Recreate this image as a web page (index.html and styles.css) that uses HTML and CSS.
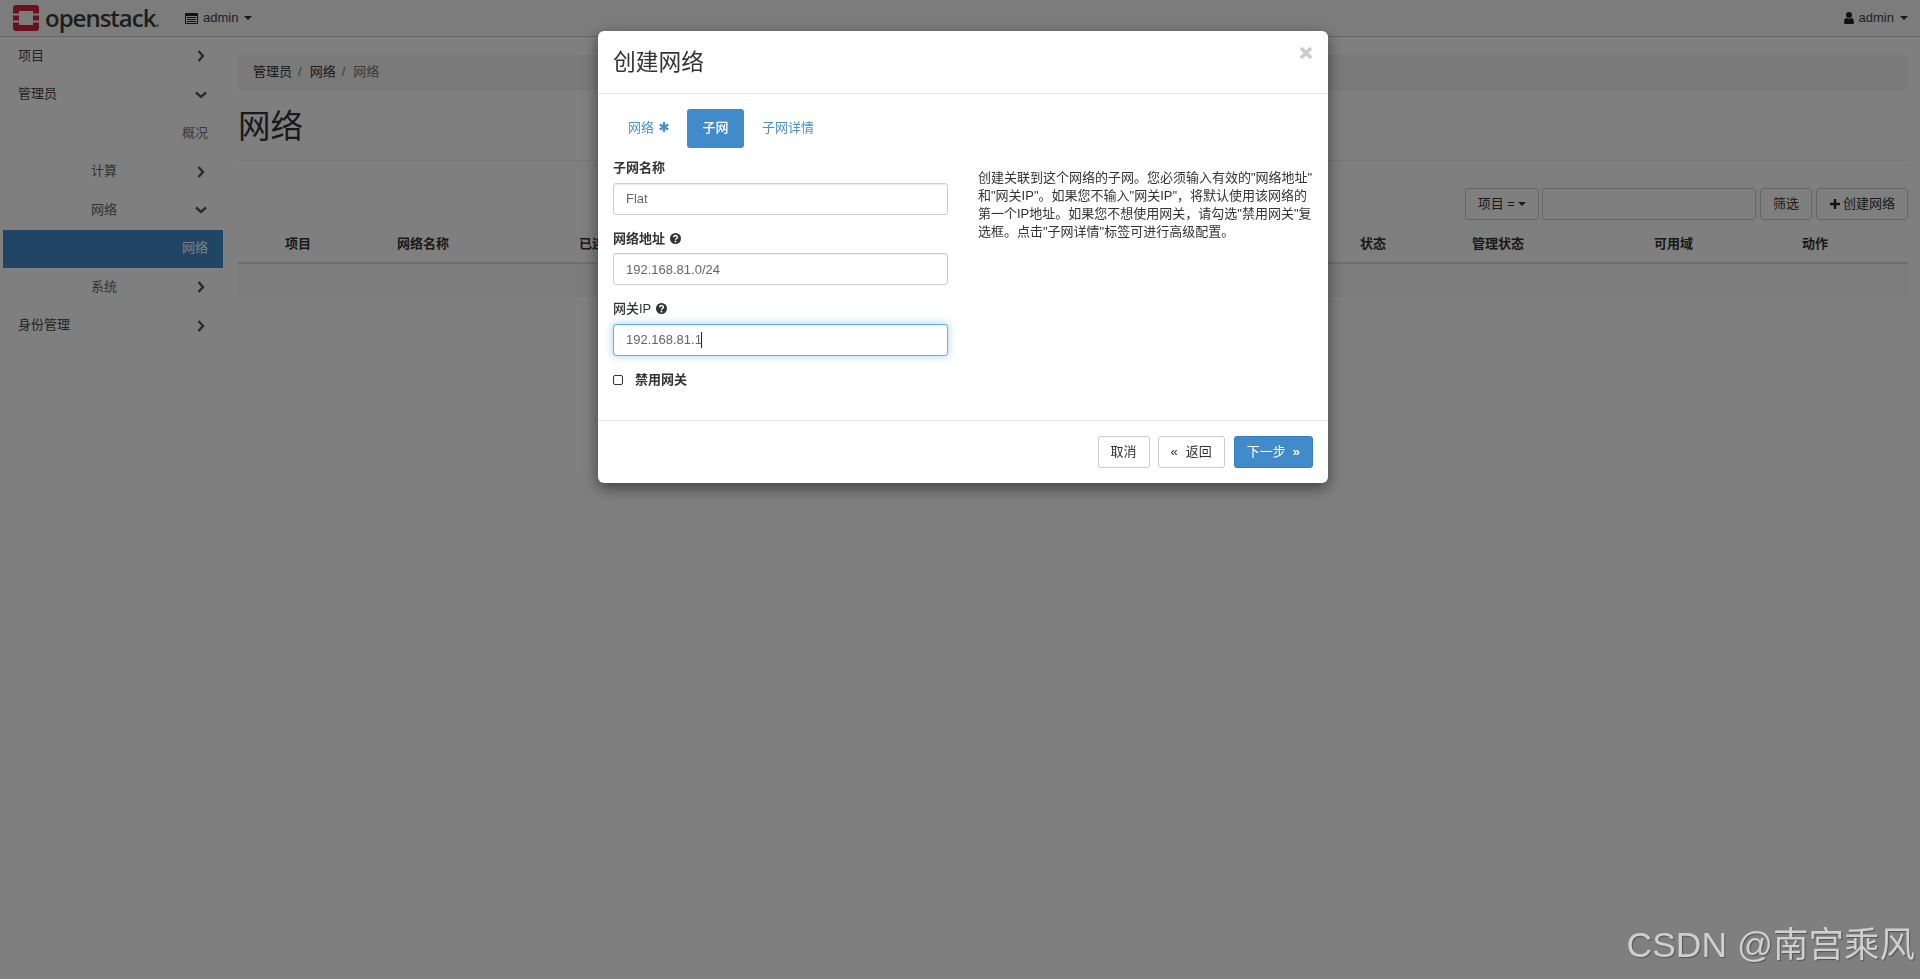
FILE: index.html
```html
<!DOCTYPE html>
<html lang="zh-CN">
<head>
    <meta charset="UTF-8">
    <meta name="viewport" content="width=device-width, initial-scale=1.0">
    <title>网络 - OpenStack Dashboard</title>
    <link rel="stylesheet" href="styles.css">
</head>
<body>
    <nav class="navbar">
        <a class="brand">
            <svg class="logo" viewBox="0 0 26 26" width="26" height="26">
                <path fill="#d6203a" d="M3 0h20a3 3 0 0 1 3 3v5.500h-6V6H6v2.500H0V3a3 3 0 0 1 3-3zM0 10.500h6v5H0zM20 10.500h6v5h-6zM0 17.500h6V20h14v-2.500h6V23a3 3 0 0 1-3 3H3a3 3 0 0 1-3-3z"/>
            </svg>
            <span class="brand-name">openstack</span><span class="brand-dot"></span>
        </a>
        <a class="nav-menu">
            <svg viewBox="0 0 13 11" width="13" height="11">
                <path fill="#222" fill-rule="evenodd" d="M1 0h11a1 1 0 0 1 1 1v9a1 1 0 0 1-1 1H1a1 1 0 0 1-1-1V1a1 1 0 0 1 1-1zm0 3v7h11V3zm1 1h9v1H2zm0 2h9v1H2zm0 2h9v1H2z"/>
            </svg>
            admin <span class="caret"></span>
        </a>
        <a class="nav-menu nav-user">
            <svg viewBox="0 0 10 12" width="10" height="12">
                <circle cx="5" cy="3" r="3" fill="#222"/>
                <path fill="#222" d="M0 10.500C0 8 1 6 2.500 6c.7.500 1.500.800 2.500.800S6.800 6.500 7.500 6C9 6 10 8 10 10.500c0 1-.7 1.500-1.500 1.500h-7C.7 12 0 11.500 0 10.500z"/>
            </svg>
            admin <span class="caret"></span>
        </a>
    </nav>

    <div class="page">
        <aside class="sidebar">
            <a class="side-item">项目 <svg class="chevron" viewBox="0 0 8 12"><path d="M1.500 1l4.500 5-4.500 5"/></svg></a>
            <a class="side-item">管理员 <svg class="chevron-down" viewBox="0 0 12 8"><path d="M1 1.500l5 4.500 5-4.500"/></svg></a>
            <a class="side-item side-leaf">概况</a>
            <a class="side-item side-sub">计算 <svg class="chevron" viewBox="0 0 8 12"><path d="M1.500 1l4.500 5-4.500 5"/></svg></a>
            <a class="side-item side-sub">网络 <svg class="chevron-down" viewBox="0 0 12 8"><path d="M1 1.500l5 4.500 5-4.500"/></svg></a>
            <a class="side-item side-leaf side-active">网络</a>
            <a class="side-item side-sub">系统 <svg class="chevron" viewBox="0 0 8 12"><path d="M1.500 1l4.500 5-4.500 5"/></svg></a>
            <a class="side-item">身份管理 <svg class="chevron" viewBox="0 0 8 12"><path d="M1.500 1l4.500 5-4.500 5"/></svg></a>
        </aside>

        <main class="content">
            <ol class="breadcrumb">
                <li>管理员</li>
                <li>网络</li>
                <li class="crumb-current">网络</li>
            </ol>
            <h1 class="page-title">网络</h1>

            <div class="toolbar">
                <button class="btn btn-filter">项目 = <span class="caret"></span></button>
                <input class="toolbar-input" type="text">
                <button class="btn btn-go">筛选</button>
                <button class="btn btn-create">
                    <svg viewBox="0 0 10 10" width="10" height="10"><path fill="#222" d="M3.800 0h2.400v3.800H10v2.400H6.200V10H3.800V6.200H0V3.800h3.800z"/></svg>
                    创建网络
                </button>
            </div>

            <div class="table-head">
                <span></span>
                <span>项目</span>
                <span>网络名称</span>
                <span>已连接的子网</span>
                <span>状态</span>
                <span>管理状态</span>
                <span>可用域</span>
                <span>动作</span>
            </div>
            <div class="table-empty"></div>
        </main>
    </div>

    <div class="backdrop">
        <section class="modal">
            <header class="modal-header">
                <h4>创建网络</h4>
                <svg class="close" viewBox="0 0 14 14" width="14" height="14"><path d="M2 2l10 10M12 2L2 12"/></svg>
            </header>

            <div class="modal-body">
                <ul class="tabs">
                    <li class="tab tab-first">网络
                        <svg class="star" viewBox="0 0 10 10" width="10" height="10"><path d="M5 0v10M.7 2.500l8.600 5M9.300 2.500l-8.600 5"/></svg>
                    </li>
                    <li class="tab tab-active">子网</li>
                    <li class="tab">子网详情</li>
                </ul>

                <div class="form-row">
                    <form class="form-col">
                        <div class="form-group">
                            <label>子网名称</label>
                            <input class="field" type="text" value="Flat">
                        </div>
                        <div class="form-group">
                            <label>网络地址
                                <svg class="help" viewBox="0 0 11 11" width="11" height="11"><circle cx="5.500" cy="5.500" r="5.500"/><path d="M3.700 4.300c0-2.300 3.700-2.300 3.700-.1 0 1.300-1.900 1.300-1.900 2.600"/><circle class="help-dot" cx="5.500" cy="8.500" r=".9"/></svg>
                            </label>
                            <input class="field" type="text" value="192.168.81.0/24">
                        </div>
                        <div class="form-group">
                            <label class="label-medium">网关IP
                                <svg class="help" viewBox="0 0 11 11" width="11" height="11"><circle cx="5.500" cy="5.500" r="5.500"/><path d="M3.700 4.300c0-2.300 3.700-2.300 3.700-.1 0 1.300-1.900 1.300-1.900 2.600"/><circle class="help-dot" cx="5.500" cy="8.500" r=".9"/></svg>
                            </label>
                            <div class="field-wrap">
                                <input class="field field-focus" type="text" value="192.168.81.1">
                                <span class="text-cursor"></span>
                            </div>
                        </div>
                        <label class="check-row"><input type="checkbox"> 禁用网关</label>
                    </form>
                    <p class="help-text">创建关联到这个网络的子网。您必须输入有效的"网络地址"<br>和"网关IP"。如果您不输入"网关IP"，将默认使用该网络的<br>第一个IP地址。如果您不想使用网关，请勾选"禁用网关"复<br>选框。点击"子网详情"标签可进行高级配置。</p>
                </div>
            </div>

            <footer class="modal-footer">
                <button class="btn-modal btn-cancel">取消</button>
                <button class="btn-modal btn-back"><span class="angle">«</span>返回</button>
                <button class="btn-modal btn-primary">下一步<span class="angle angle-next">»</span></button>
            </footer>
        </section>
    </div>

    <div class="watermark">CSDN @南宫乘风</div>
</body>
</html>
```

FILE: styles.css
```css
* {
    box-sizing: border-box;
}
body {
    margin: 0;
    height: 979px;
    overflow: hidden;
    background: #fff;
    color: #333;
    font-family: "Liberation Sans", "Noto Sans CJK SC", sans-serif;
    font-size: 13px;
    line-height: 18.57px;
}

/* top bar */
.navbar {
    display: flex;
    align-items: center;
    height: 37px;
    padding: 0 12px 0 13px;
    background: #f8f8f8;
    border-bottom: 1px solid #ccc;
}
.brand {
    display: flex;
    align-items: center;
    width: 172px;
}
.logo {
    margin-right: 6px;
}
.brand-name {
    font-family: "Open Sans", sans-serif;
    font-size: 24px;
    font-weight: 600;
    line-height: 26px;
    letter-spacing: -1px;
    color: #3c3c3c;
}
.brand-dot {
    width: 3px;
    height: 3px;
    margin: 15px 0 0 1px;
    border-radius: 50%;
    background: #888;
}
.nav-menu {
    display: flex;
    align-items: center;
    gap: 5px;
    color: #444;
}
.nav-user {
    margin-left: auto;
    gap: 5px;
}
.caret {
    display: inline-block;
    width: 0;
    height: 0;
    margin-left: 1px;
    border-top: 4px solid #333;
    border-left: 4px solid transparent;
    border-right: 4px solid transparent;
}

/* page */
.page {
    display: flex;
}
.sidebar {
    flex: none;
    width: 223px;
    padding-left: 3px;
}
.side-item {
    display: flex;
    align-items: center;
    justify-content: space-between;
    height: 38.5px;
    padding: 0 18px 0 15px;
    color: #444;
}
.side-sub {
    padding-left: 88px;
    color: #666;
}
.side-leaf {
    justify-content: flex-end;
    padding-right: 15px;
    color: #777;
}
.side-active {
    background: #428bca;
    color: #fff;
}
.chevron,
.chevron-down {
    fill: none;
    stroke: #555;
    stroke-width: 2.400;
}
.chevron {
    width: 8px;
    height: 12px;
}
.chevron-down {
    width: 12px;
    height: 8px;
    margin-right: -2px;
}
.content {
    flex: 1;
    min-width: 0;
    padding: 18px 12px 0 15px;
}
.breadcrumb {
    display: flex;
    align-items: center;
    height: 35px;
    margin: 0;
    padding: 0 15px;
    list-style: none;
    background: #f5f5f5;
    border-radius: 3px;
}
.breadcrumb li + li::before {
    content: "/";
    padding: 0 8px 0 6px;
    color: #777;
}
.crumb-current {
    color: #777;
}
.page-title {
    margin: 0;
    padding: 19px 0 13px;
    height: 71px;
    font-size: 32.500px;
    font-weight: 400;
    line-height: 36px;
    border-bottom: 1px solid #eee;
}
.toolbar {
    display: flex;
    justify-content: flex-end;
    height: 31px;
    margin-top: 27px;
}
.btn {
    display: flex;
    align-items: center;
    gap: 3px;
    height: 32px;
    padding: 0 12px;
    background: #fff;
    border: 1px solid #ccc;
    border-radius: 3px;
    color: #333;
    font: inherit;
}
.btn-filter {
    margin-right: 3px;
    gap: 2px;
}
.btn-go {
    margin: 0 4px;
}
.btn-create {
    padding: 0 12px 0 13px;
}
.toolbar-input {
    width: 214px;
    height: 32px;
    border: 1px solid #ccc;
    border-radius: 3px;
}
.table-head {
    display: grid;
    grid-template-columns: 39px 112px 182px 781px 112px 182px 148px 114px;
    align-items: center;
    height: 45px;
    padding-top: 7px;
    border-bottom: 2px solid #ddd;
    font-weight: 700;
}
.table-head span {
    padding-left: 8px;
}
.table-empty {
    height: 33px;
    background: #f9f9f9;
}

/* modal */
.backdrop {
    position: fixed;
    inset: 0;
    display: flex;
    align-items: flex-start;
    justify-content: center;
    padding: 31px 0 0 6px;
    background: rgba(0, 0, 0, 0.5);
}
.modal {
    width: 730px;
    background: #fff;
    border-radius: 6px;
    box-shadow: 0 5px 15px rgba(0, 0, 0, 0.5);
}
.modal-header {
    display: flex;
    justify-content: space-between;
    height: 63px;
    padding: 15px 15px 0;
    border-bottom: 1px solid #e5e5e5;
}
.modal-header h4 {
    margin: 0;
    font-size: 22.750px;
    font-weight: 400;
    line-height: 32px;
}
.close {
    fill: none;
    stroke: #ccc;
    stroke-width: 3.600;
}
.modal-body {
    height: 326px;
    padding: 15px 15px 0;
}
.tabs {
    display: flex;
    gap: 2px;
    margin: 0 0 11px;
    padding: 0;
    list-style: none;
}
.tab {
    display: flex;
    align-items: center;
    gap: 4px;
    height: 39px;
    padding: 0 15px;
    color: #4a90d0;
    border-radius: 3px;
}
.tab-first {
    margin-right: 1px;
    gap: 5px;
}
.tab-active {
    margin-right: 1px;
    padding: 0 15.500px;
    background: #428bca;
    color: #fff;
    font-weight: 500;
}
.star {
    margin-top: -4px;
    fill: none;
    stroke: #4a90d0;
    stroke-width: 2.400;
}
.form-row {
    display: flex;
    gap: 30px;
}
.form-col {
    flex: none;
    width: 335px;
}
.form-group {
    margin-bottom: 15px;
}
.form-group label {
    display: block;
    margin-bottom: 5px;
    font-weight: 700;
}
.form-group .label-medium {
    font-weight: 500;
}
.help {
    vertical-align: -1px;
    margin-left: 1px;
}
.help circle {
    fill: #333;
}
.help path {
    fill: none;
    stroke: #fff;
    stroke-width: 1.500;
}
.help .help-dot {
    fill: #fff;
}
.field {
    display: block;
    width: 100%;
    height: 32px;
    padding: 6px 12px;
    border: 1px solid #ccc;
    border-radius: 3px;
    color: #666;
    font: inherit;
    outline: none;
    box-shadow: inset 0 1px 1px rgba(0, 0, 0, 0.075);
}
.field-wrap {
    position: relative;
}
.field-focus {
    border-color: #66afe9;
    box-shadow: inset 0 1px 1px rgba(0, 0, 0, 0.075), 0 0 8px rgba(102, 175, 233, 0.6);
}
.text-cursor {
    position: absolute;
    left: 88px;
    top: 8px;
    width: 1px;
    height: 16px;
    background: #222;
}
.check-row {
    display: flex;
    align-items: center;
    gap: 12px;
    font-weight: 700;
}
.check-row input {
    appearance: none;
    flex: none;
    width: 10px;
    height: 10px;
    margin: 0;
    background: #fff;
    border: 1px solid #333;
    border-radius: 2px;
}
.help-text {
    margin: 10px 0 0;
    line-height: 18px;
    white-space: nowrap;
}
.modal-footer {
    display: flex;
    justify-content: flex-end;
    gap: 8px;
    padding: 15px;
    border-top: 1px solid #e5e5e5;
}
.btn-modal {
    height: 32px;
    padding: 0 12px;
    background: #fff;
    border: 1px solid #ccc;
    border-radius: 3px;
    color: #333;
    font: inherit;
}
.btn-cancel {
    padding: 0 12px 0 11px;
}
.btn-back {
    margin-right: 1px;
}
.btn-primary {
    background: #428bca;
    border-color: #357ebd;
    color: #fff;
}
.angle {
    margin-right: 8px;
}
.angle-next {
    margin: 0 0 0 7px;
    font-weight: 700;
}

.watermark {
    position: fixed;
    right: 5px;
    bottom: 12px;
    color: #cfcfcf;
    font-size: 35.500px;
    line-height: 44px;
    text-shadow: 1px 1px 1px #555;
    white-space: nowrap;
}
```
